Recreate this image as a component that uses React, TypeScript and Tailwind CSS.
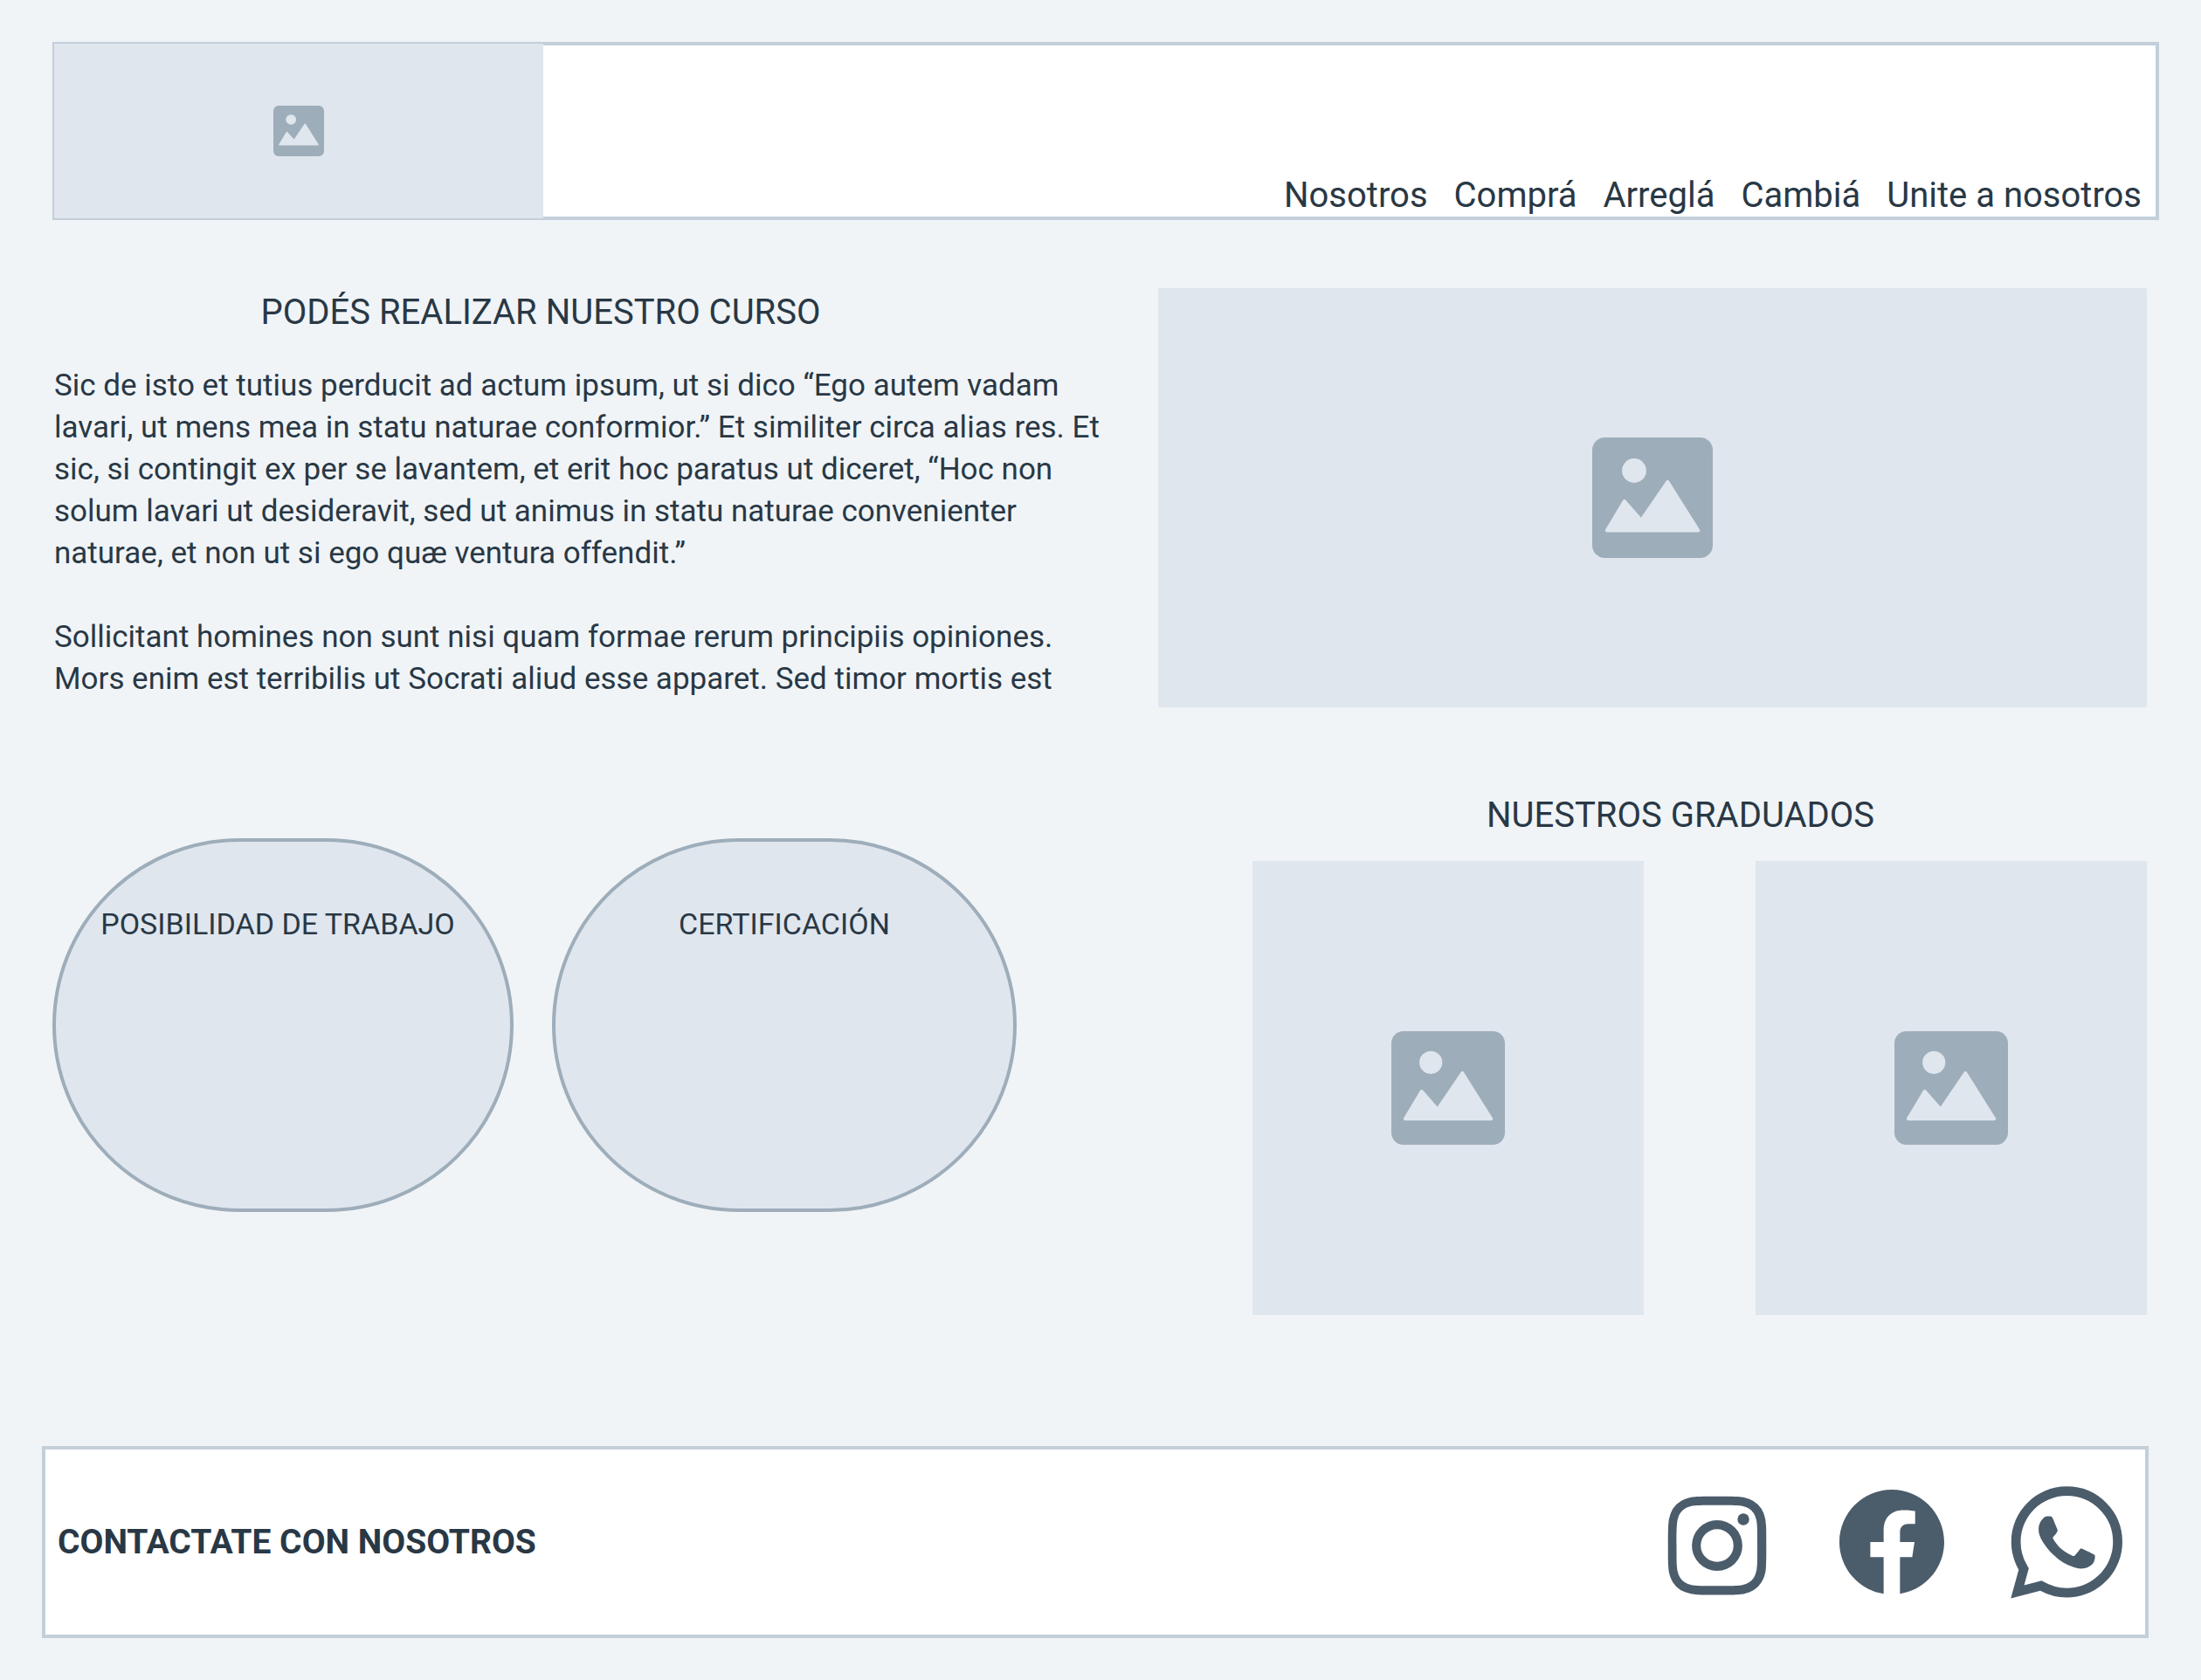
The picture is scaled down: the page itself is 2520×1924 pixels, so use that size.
import { BiLogoFacebookCircle, BiLogoInstagram, BiLogoWhatsapp } from "react-icons/bi";

const links = ["Nosotros", "Comprá", "Arreglá", "Cambiá", "Unite a nosotros"];

function Placeholder({ className, iconClass, label }: { className: string; iconClass: string; label: string }) {
  return (
    <div role="img" aria-label={label} className={`flex items-center justify-center bg-[#dfe6ee] ${className}`}>
      <svg viewBox="0 0 138 138" className={iconClass} aria-hidden="true">
        <rect width="138" height="138" rx="14.5" fill="#9eadba" />
        <circle cx="48" cy="38" r="13.9" fill="#dfe6ee" />
        <path
          d="M16.8 106.5 36.8 73 56.2 95 86.3 50.8 121.3 106.5Z"
          fill="#dfe6ee"
          stroke="#dfe6ee"
          strokeWidth="4"
          strokeLinejoin="round"
        />
      </svg>
    </div>
  );
}

export default function App() {
  return (
    <div className="min-h-screen bg-[#f0f4f7] pt-12 pb-12 font-['Roboto',sans-serif] text-[#293845]">
      <header className="mr-12 ml-[60px] flex h-[204px] justify-between border-4 border-[#c3cfd9] bg-white">
        <Placeholder className="-m-0.5 w-[560px] shrink-0" iconClass="size-[58px]" label="Logo" />
        <nav className="flex gap-[30px] self-end pr-4 text-[40px] leading-[48px]">
          {links.map((l) => (
            <a key={l} href="#" className="whitespace-nowrap">
              {l}
            </a>
          ))}
        </nav>
      </header>

      <main className="pr-[62px] pl-[60px]">
        <section className="mt-[78px] grid grid-cols-[1226fr_1132fr] gap-10">
          <div className="pt-1">
            <h1 className="pr-[108px] text-center text-[40px] leading-[48px]">PODÉS REALIZAR NUESTRO CURSO</h1>
            <div className="mt-9 flex flex-col gap-12 pl-0.5 text-[35px] leading-[48px]">
              <p>
                Sic de isto et tutius perducit ad actum ipsum, ut si dico “Ego autem vadam lavari, ut mens mea in statu
                naturae conformior.” Et similiter circa alias res. Et sic, si contingit ex per se lavantem, et erit hoc
                paratus ut diceret, “Hoc non solum lavari ut desideravit, sed ut animus in statu naturae convenienter
                naturae, et non ut si ego quæ ventura offendit.”
              </p>
              <p>
                Sollicitant homines non sunt nisi quam formae rerum principiis opiniones.
                <br />
                Mors enim est terribilis ut Socrati aliud esse apparet. Sed timor mortis est
              </p>
            </div>
          </div>
          <Placeholder className="h-[480px]" iconClass="size-[138px]" label="Curso" />
        </section>

        <section className="mt-[100px] grid grid-cols-[1104fr_1024fr] gap-[270px]">
          <div className="mt-[50px] grid grid-cols-[528fr_532fr] items-start gap-11 text-center text-[34px] leading-[48px]">
            <div className="h-[428px] rounded-full border-4 border-[#9eadba] bg-[#dfe6ee] pt-[70px] pr-3">
              <h2>POSIBILIDAD DE TRABAJO</h2>
            </div>
            <div className="h-[428px] rounded-full border-4 border-[#9eadba] bg-[#dfe6ee] pt-[70px]">
              <h2>CERTIFICACIÓN</h2>
            </div>
          </div>
          <div>
            <h2 className="pr-11 text-center text-[40px] leading-[48px]">NUESTROS GRADUADOS</h2>
            <div className="mt-7 grid grid-cols-2 gap-32">
              <Placeholder className="h-[520px]" iconClass="size-[130px]" label="Graduado 1" />
              <Placeholder className="h-[520px]" iconClass="size-[130px]" label="Graduado 2" />
            </div>
          </div>
        </section>
      </main>

      <footer className="mt-[150px] mr-[60px] ml-12 flex h-[220px] items-center justify-between border-4 border-[#c3cfd9] bg-white pr-[5px] pl-3.5">
        <h2 className="text-[39px] leading-[48px] font-bold">CONTACTATE CON NOSOTROS</h2>
        <div className="flex items-center gap-[30px] text-[#4b5c6b]">
          <a href="#" aria-label="Instagram" className="flex w-[170px] justify-center pt-2">
            <BiLogoInstagram className="size-[150px]" />
          </a>
          <a href="#" aria-label="Facebook" className="flex w-[170px] justify-center">
            <BiLogoFacebookCircle className="size-36" />
          </a>
          <a href="#" aria-label="WhatsApp" className="flex w-[170px] justify-center">
            <BiLogoWhatsapp className="size-[170px]" />
          </a>
        </div>
      </footer>
    </div>
  );
}
